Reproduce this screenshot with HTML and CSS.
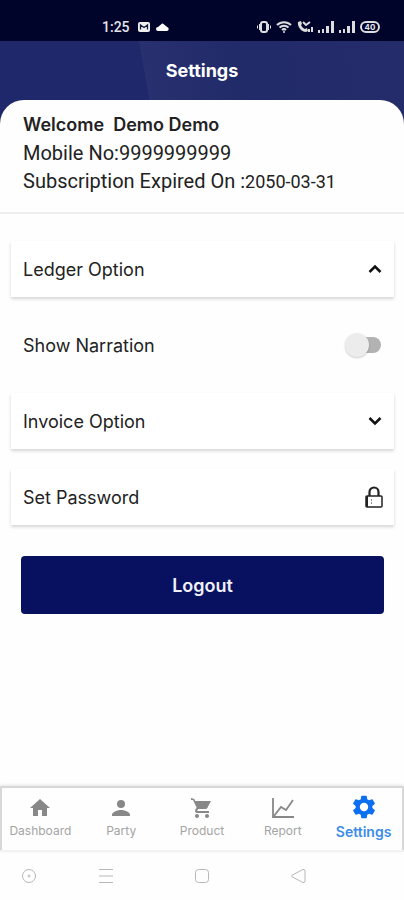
FILE: index.html
```html
<!DOCTYPE html>
<html lang="en">
<head>
  <meta charset="UTF-8">
  <meta name="viewport" content="width=device-width, initial-scale=1">
  <title>Settings</title>
  <link rel="stylesheet" href="styles.css">
</head>
<body>

<!-- Status bar -->
<div class="status-bar">
  <div class="status-left">
    <span class="time">1:25</span>
    <svg width="12" height="10" viewBox="0 0 12 10"><rect width="12" height="10" rx="2" fill="#eee"/><path d="M2.500 7.500V3L6 5.500 9.500 3v4.500" fill="none" stroke="#111638" stroke-width="1.300"/></svg>
    <svg width="13" height="8" viewBox="0 0 13 8"><path d="M2 8a2 2 0 0 1 0-4L5 1.500Q6.500-.5 8 1.500L11.500 4.200A2 2 0 0 1 11 8z" fill="#fff"/></svg>
  </div>
  <div class="status-right">
    <svg width="14" height="12" viewBox="0 0 14 12" fill="none" stroke="#ddd"><rect x="4" y="1" width="6" height="10" rx="2" stroke-width="2"/><path d="M2.500 3v6M11.500 3v6M.5 4.500v3M13.500 4.500v3"/></svg>
    <svg width="16" height="12" viewBox="0 0 16 12" fill="none" stroke="#ddd" stroke-width="2"><path d="M1 4a10 10 0 0 1 14 0M3.500 6.500a6.500 6.500 0 0 1 9 0M6 9a3 3 0 0 1 4 0"/><circle cx="8" cy="11" r="1" fill="#ddd" stroke="none"/></svg>
    <svg width="16" height="12" viewBox="0 0 16 12"><path d="M1 1l3-1 1 3-1 1c1 2 2 3 4 4l2-1 1 3-2 1C5 11 0 6 1 1z" fill="#ddd"/><path d="M6 1l3 3 4-3M12 11V8M15 11V6" fill="none" stroke="#ddd" stroke-width="2"/></svg>
    <svg width="16" height="12" viewBox="0 0 16 12" fill="#ddd"><path d="M0 9h2v3H0zM4 8h2v4H4zM8 5h3v7H8zM13 0h3v12h-3z"/></svg>
    <svg width="16" height="12" viewBox="0 0 16 12" fill="#ddd"><path d="M0 9h2v3H0zM4 8h2v4H4zM8 5h3v7H8zM13 0h3v12h-3z"/></svg>
    <span class="battery">40</span>
  </div>
</div>

<!-- Header and account details -->
<div class="top">
  <h1>Settings</h1>
  <div class="account">
    <p class="welcome">Welcome&nbsp; Demo Demo</p>
    <p>Mobile No:9999999999</p>
    <p>Subscription Expired On :<span class="date">2050-03-31</span></p>
  </div>
</div>

<main class="options">
  <button class="option card">
    <span>Ledger Option</span>
    <svg width="16" height="16" viewBox="0 0 16 16" fill="none" stroke="#111" stroke-width="2.500"><path d="M2.500 11L8 5.500 13.500 11"/></svg>
  </button>

  <div class="option">
    <label for="narration">Show Narration</label>
    <input type="checkbox" id="narration" class="switch">
  </div>

  <button class="option card">
    <span>Invoice Option</span>
    <svg width="16" height="16" viewBox="0 0 16 16" fill="none" stroke="#111" stroke-width="2.500"><path d="M2.500 5L8 10.500 13.500 5"/></svg>
  </button>

  <button class="option card">
    <span>Set Password</span>
    <svg width="18" height="22" viewBox="0 0 18 22" fill="none" stroke="#222"><rect x="1" y="10" width="16" height="11" rx="1" stroke-width="1.500"/><path d="M2 10v11" stroke-width="2"/><path d="M4.500 10V6a4.500 4.500 0 0 1 9 0v4" stroke-width="2.200"/><path d="M6 14h1M6 17h1"/></svg>
  </button>

  <button class="logout">Logout</button>
</main>

<!-- Tabs -->
<nav class="tabs">
  <a href="#">
    <svg width="24" height="24" viewBox="0 0 24 24"><path d="M10 20v-6h4v6h5v-8h3L12 3 2 12h3v8z"/></svg>
    Dashboard
  </a>
  <a href="#">
    <svg width="24" height="24" viewBox="0 0 24 24"><circle cx="12" cy="8" r="4"/><path d="M12 14c-3 0-9 1.500-9 5v1h18v-1c0-3.500-6-5-9-5z"/></svg>
    Party
  </a>
  <a href="#">
    <svg width="24" height="24" viewBox="0 0 24 24"><path d="M7 18c-1.100 0-1.990.9-1.990 2S5.900 22 7 22s2-.9 2-2-.9-2-2-2zM1 2v2h2l3.600 7.590-1.350 2.450C4.520 15.370 5.480 17 7 17h12v-2H7.420c-.14 0-.25-.11-.25-.25l.03-.12.900-1.630h7.450c.75 0 1.410-.41 1.750-1.030L21 5H5.210l-.94-2zM17 18c-1.100 0-1.990.9-1.990 2s.890 2 1.990 2 2-.9 2-2-.9-2-2-2z"/></svg>
    Product
  </a>
  <a href="#">
    <svg width="24" height="24" viewBox="0 0 24 24" fill="none" stroke="#888" stroke-width="1.800"><path d="M2 2v19h21"/><path d="M3 20l7-9 5 3 7-10"/></svg>
    Report
  </a>
  <a href="#" class="active">
    <svg width="28" height="28" viewBox="0 0 24 24"><path d="M19.140 12.940c.04-.3.060-.61.060-.94s-.02-.64-.07-.94l2.030-1.580a.49.49 0 0 0 .12-.61l-1.920-3.320a.49.49 0 0 0-.59-.22l-2.390.96a7 7 0 0 0-1.620-.94l-.36-2.540A.48.48 0 0 0 13.920 2.400h-3.840a.48.48 0 0 0-.48.410l-.36 2.540a7 7 0 0 0-1.620.94l-2.390-.96a.48.48 0 0 0-.59.220L2.720 8.870a.48.48 0 0 0 .12.610l2.030 1.580a6 6 0 0 0 0 1.880l-2.030 1.580a.49.49 0 0 0-.12.610l1.920 3.320c.12.220.37.290.59.220l2.390-.96c.5.380 1.030.700 1.620.940l.36 2.540c.05.240.24.410.48.410h3.840c.24 0 .44-.17.480-.41l.36-2.540a7 7 0 0 0 1.620-.94l2.390.96c.22.080.47 0 .59-.22l1.920-3.320a.48.48 0 0 0-.12-.61zM12 15.600a3.600 3.600 0 1 1 0-7.200 3.600 3.600 0 0 1 0 7.200z"/></svg>
    Settings
  </a>
</nav>

<!-- Phone navigation -->
<div class="phone-nav">
  <svg width="16" height="16" viewBox="0 0 16 16"><circle cx="8" cy="8" r="6.500"/><circle cx="8" cy="8" r="1"/></svg>
  <svg width="16" height="16" viewBox="0 0 16 16"><path d="M1 1.500h14M1 8h14M1 14.500h14"/></svg>
  <svg width="16" height="16" viewBox="0 0 16 16"><rect x="1.500" y="1.500" width="13" height="13" rx="3"/></svg>
  <svg width="16" height="16" viewBox="0 0 16 16"><path d="M13 1.500L2 7.200q-1 .8 0 1.600l11 5.700q2 .5 2-1.500V3q0-2-2-1.500z"/></svg>
</div>

</body>
</html>
```
FILE: styles.css
```css
* {
  margin: 0;
  padding: 0;
  box-sizing: border-box;
}

body {
  display: flex;
  flex-direction: column;
  min-height: 100vh;
  font-family: Inter, sans-serif;
  font-size: 18px;
  color: #222;
  background-color: #fefefe;
}

svg {
  display: block;
  flex-shrink: 0;
}

button {
  border: none;
  font: inherit;
  color: inherit;
  cursor: pointer;
}

/* Status bar */
.status-bar {
  display: flex;
  justify-content: space-between;
  align-items: center;
  height: 41px;
  padding: 12px 24px 0 102px;
  background-color: #00042b;
  color: #e4e4ea;
}

.status-left {
  display: flex;
  align-items: center;
  gap: 6px;
}

.time {
  margin-right: 2px;
  font-family: Roboto, sans-serif;
  font-size: 14px;
  font-weight: 500;
  line-height: 16px;
}

.status-right {
  display: flex;
  align-items: center;
  gap: 5px;
}

.battery {
  width: 20px;
  border: 2px solid #ddd;
  border-radius: 6px;
  font-size: 8px;
  font-weight: bold;
  line-height: 8px;
  text-align: center;
}

/* Header */
.top {
  background: linear-gradient(80deg, #20286c 39%, #283070 39%, #222b6a 60%, #242c6a);
}

h1 {
  font-size: 18px;
  font-weight: 700;
  line-height: 59px;
  text-align: center;
  color: #fff;
}

.account {
  padding: 11px 23px 16px;
  border-bottom: 2px solid #eee;
  border-radius: 24px 24px 0 0;
  background-color: #fefefe;
  font-family: Roboto, sans-serif;
  font-size: 20px;
  line-height: 28px;
}

.account .welcome {
  font-family: Inter, sans-serif;
  font-size: 18px;
  font-weight: 600;
}

.account .date {
  font-size: 18px;
}

/* Options */
.options {
  display: flex;
  flex: 1;
  flex-direction: column;
  gap: 20px;
  padding: 27px 10px 20px 11px;
}

.option {
  display: flex;
  justify-content: space-between;
  align-items: center;
  height: 56px;
  padding: 0 11px 0 12px;
  text-align: left;
}

.card {
  background-color: #fff;
  box-shadow: 0 2px 3px rgba(0, 0, 0, 0.16);
}

.switch {
  appearance: none;
  position: relative;
  width: 34px;
  height: 16px;
  border-radius: 8px;
  margin-right: 2px;
  background-color: #b2b2b2;
  cursor: pointer;
}

.switch::before {
  content: "";
  position: absolute;
  top: -4px;
  left: -2px;
  width: 24px;
  height: 24px;
  border-radius: 50%;
  background-color: #ececec;
  box-shadow: 0 1px 2px rgba(0, 0, 0, 0.2);
}

.switch:checked::before {
  left: 12px;
}

.logout {
  height: 58px;
  margin: 11px 10px 0;
  border-radius: 4px;
  background-color: #081060;
  font-weight: 600;
  color: #f0f0f8;
}

/* Tabs */
.tabs {
  display: grid;
  grid-template-columns: repeat(5, 1fr);
  height: 66px;
  border-top: 2px solid #d8d8d8;
  border-bottom: 2px solid #f2f2f2;
  box-shadow: inset 2px 0 #d8d8d8, inset -2px 0 #d8d8d8, 0 -1px 3px rgba(0, 0, 0, 0.1);
}

.tabs a {
  display: flex;
  flex-direction: column;
  align-items: center;
  padding-top: 8px;
  font-size: 12px;
  line-height: 21px;
  color: #a4a4a4;
  text-decoration: none;
}

.tabs svg {
  fill: #888;
}

.tabs svg[fill="none"] {
  fill: none;
}

.tabs .active {
  padding-top: 5px;
  font-size: 14px;
  font-weight: 600;
  color: #3b8de8;
}

.tabs .active svg {
  fill: #0b6ff0;
}

/* Phone navigation */
.phone-nav {
  display: grid;
  grid-template-columns: 58fr 96fr 96fr 96fr 58fr;
  place-items: center;
  height: 48px;
}

.phone-nav svg {
  fill: none;
  stroke: #b8b8b8;
}
```
